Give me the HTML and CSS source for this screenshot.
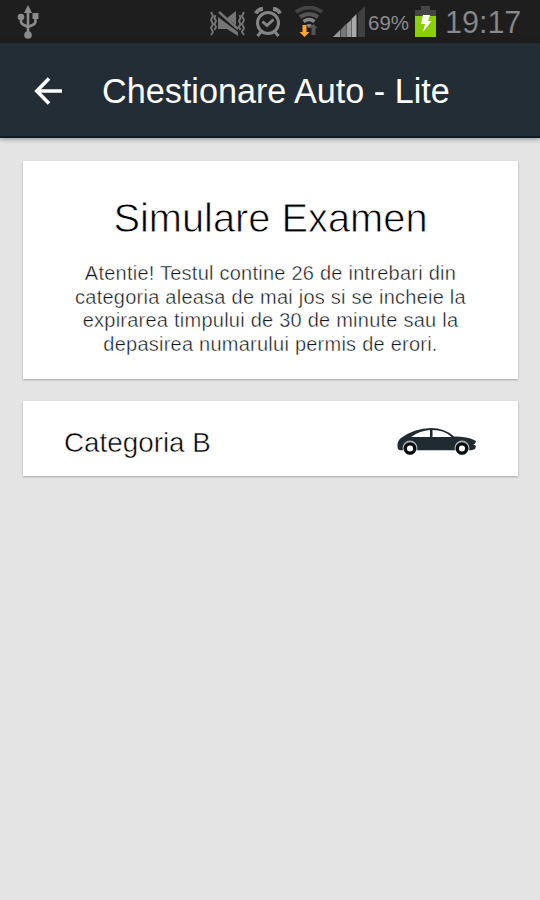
FILE: index.html
```
<!DOCTYPE html>
<html lang="ro">
<head>
<meta charset="utf-8">
<title>Chestionare Auto - Lite</title>
<link rel="stylesheet" href="styles.css">
</head>
<body>
<div class="status">
  <svg class="usb" width="24" height="36" viewBox="0 0 24 36" fill="#8b8b8b">
    <path d="M11 0l4 8h-8z"/><circle cx="11" cy="30" r="3.8"/><circle cx="4" cy="12" r="3.3"/><rect x="15.5" y="8" width="6" height="6"/>
    <path d="M11 6v24M4 12v4q0 3 3 4l4 2M18.500 12v4q0 3-3 4l-4.500 2" fill="none" stroke="#8b8b8b" stroke-width="2.600"/>
  </svg>
  <svg class="mute" width="38" height="28" viewBox="0 0 38 28" fill="#757575">
    <path d="M9 8l20 15v4l-11-7h-9zM18 9l9-7v14z"/>
    <path d="M12 6.500l17 14" stroke="#1e1e1e" stroke-width="1.500"/><path d="M10 3l19 17" stroke="#757575" stroke-width="2.400"/>
    <path d="M2 3l2 4-2 4 2 4-2 4 2 4-2 3M6.500 6l-1 3 1.500 3-1.500 3 1.500 3-1.500 3M35 3l-2 4 2 4-2 4 2 4-2 4 2 3M30.500 6l1 3-1.500 3 1.500 3-1.500 3 1.500 3" fill="none" stroke="#757575" stroke-width="1.900"/>
  </svg>
  <svg class="alarm" width="30" height="32" viewBox="0 0 30 32" fill="none" stroke="#858585" stroke-width="3">
    <circle cx="15" cy="17" r="10.500"/><path d="M9.500 15.500l4.500 4 6.500-6M8 26l-3.500 4M22 26l3.500 4"/><path d="M3 7.500q2-4.500 7-4.500M20 3q5 0 7 4.500" stroke-width="4"/>
  </svg>
  <svg class="wifi" width="30" height="32" viewBox="0 0 30 32" fill="none">
    <path d="M2 6q13-9 26 0" stroke="#444" stroke-width="4"/><path d="M6 11q9-6 18 0" stroke="#555" stroke-width="4"/><path d="M9.500 15.500q5.500-4 11 0" stroke="#888" stroke-width="3.500"/><path d="M12 19q3-2 6 0l-3 3z" fill="#888"/>
    <path d="M17.500 29v-7H15l4.500-4 4 4h-2v7z" fill="#555"/><path d="M8.500 19h4v7h3L10.500 31 5.500 26h3z" fill="#ffa52d"/>
  </svg>
  <svg class="signal" width="33" height="32" viewBox="0 0 33 32">
    <path d="M0 31L7 24v7z" fill="#999"/><path d="M7.500 24l5.500-6v13H7.500z" fill="#777"/><path d="M13.500 18l4.500-4v17h-4.500z" fill="#999"/><path d="M18.500 13l5-5v23h-5z" fill="#aaa"/><path d="M25 7l7-7v31h-7z" fill="#414141"/>
  </svg>
  <span class="percent">69%</span>
  <svg class="battery" width="22" height="32" viewBox="0 0 22 32">
    <path d="M6 0h9v4h6v8H0V4h6z" fill="#454545"/><path d="M0 10h21v21H0z" fill="#8bd000"/><path d="M8 9h7l-2 6h3.500L8 26l2-8H6z" fill="#fff"/>
  </svg>
  <span class="clock">19:17</span>
</div>
<header class="bar">
  <svg class="back" width="28" height="28" viewBox="0 0 28 28" fill="none" stroke="#fff" stroke-width="3.600"><path d="M15 1.500L2.800 14 15 26.500M3 14h25"/></svg>
  <h1 class="title">Chestionare Auto - Lite</h1>
</header>
<main class="content">
  <section class="card intro">
    <h2 class="heading">Simulare Examen</h2>
    <p class="text">Atentie! Testul contine 26 de intrebari din<br>categoria aleasa de mai jos si se incheie la<br>expirarea timpului de 30 de minute sau la<br>depasirea numarului permis de erori.</p>
  </section>
  <section class="card category">
    <span class="label">Categoria B</span>
    <svg class="car" width="80" height="28" viewBox="0 0 80 28">
      <path d="M1 21Q-1 14 4 10 18 0 34 0 48 0 57 8.500q14 0 20 3.500l2 1-1 3 1 2-1 3-4 1.500H3z" fill="#1f2a31"/>
      <path d="M14 9q9-6.500 19-7V9zM35.500 2q12 0 19 7h-19z" fill="#fff"/>
      <circle cx="13" cy="20" r="7.500" fill="#aab0b3"/><circle cx="65" cy="20" r="7.500" fill="#aab0b3"/><path d="M0 22.500h80v5H0z" fill="#fff"/>
      <g fill="#fff" stroke="#050a0d" stroke-width="3.300"><circle cx="13" cy="20.500" r="4.700"/><circle cx="65" cy="20.500" r="4.700"/></g>
      <path d="M76 16.500l4-1.500v3z" fill="#fff"/>
    </svg>
  </section>
</main>
</body>
</html>
```
FILE: styles.css
```
* { box-sizing: border-box; }
body { margin: 0; height: 900px; background: #e4e4e4; font-family: "Liberation Sans", Arial, sans-serif; overflow: hidden; }
svg { display: block; flex: none; }
.status { display: flex; align-items: flex-start; height: 43px; padding-left: 17px; background: #1e1e1e; color: #8b8b8b; }
.usb { margin-top: 5px; }
.mute { margin: 9px 0 0 168px; }
.alarm { margin: 6px 0 0 6px; }
.wifi { margin: 6px 0 0 11px; }
.signal { margin: 6px 0 0 9px; }
.percent { width: 49px; padding-left: 2px; font-size: 20.5px; line-height: 46px; }
.battery { margin-top: 6px; }
.clock { margin-left: 8px; font-size: 30.5px; line-height: 44px; -webkit-text-stroke: 0.2px #1e1e1e; }
.bar { display: flex; align-items: center; height: 95px; padding: 2px 0 0 34px; background: #222d36; border-bottom: 2px solid #0b1c27; box-shadow: 0 1px 5px rgba(0, 0, 0, .4); }
.title { margin: 1px 0 0 40px; color: #fff; font-size: 34.2px; font-weight: 400; line-height: 40px; white-space: nowrap; }
.content { display: flex; flex-direction: column; gap: 22px; padding: 23px 22px 0 23px; }
.card { background: #fff; box-shadow: 0 1px 2px rgba(0, 0, 0, .28); color: #10161a; }
.intro { height: 218px; padding-top: 34px; text-align: center; }
.heading { margin: 0; font-size: 39.8px; font-weight: 400; line-height: 46px; -webkit-text-stroke: 0.8px #fff; color: #000; }
.text { margin: 21px 0 0; font-size: 20px; line-height: 23.7px; letter-spacing: .24px; white-space: nowrap; -webkit-text-stroke: 0.4px #fff; }
.category { display: flex; align-items: center; justify-content: space-between; height: 75px; padding: 0 41px 0 41px; }
.label { padding-top: 9px; font-size: 27.8px; line-height: 32px; -webkit-text-stroke: 0.5px #fff; color: #000; }
.car { margin-top: 6px; }
```
